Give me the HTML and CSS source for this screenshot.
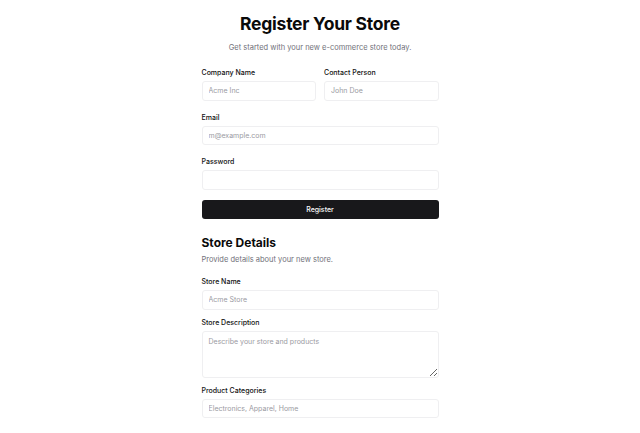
FILE: index.html
```html
<!DOCTYPE html>
<html lang="en">
<head>
<meta charset="utf-8">
<title>Register Your Store</title>
<link rel="stylesheet" href="styles.css">
</head>
<body>
<main class="page">
  <header class="intro">
    <h1 class="title">Register Your Store</h1>
    <p class="subtitle">Get started with your new e-commerce store today.</p>
  </header>
  <form class="form">
    <div class="row">
      <div class="field">
        <label class="label">Company Name</label>
        <input class="input" placeholder="Acme Inc">
      </div>
      <div class="field">
        <label class="label">Contact Person</label>
        <input class="input" placeholder="John Doe">
      </div>
    </div>
    <div class="field">
      <label class="label">Email</label>
      <input class="input" placeholder="m@example.com">
    </div>
    <div class="field">
      <label class="label">Password</label>
      <input class="input" type="password">
    </div>
    <button type="button" class="btn">Register</button>
  </form>
  <section class="details">
    <h2 class="section-title">Store Details</h2>
    <p class="section-sub">Provide details about your new store.</p>
    <div class="details-fields">
      <div class="field">
        <label class="label">Store Name</label>
        <input class="input" placeholder="Acme Store">
      </div>
      <div class="field">
        <label class="label">Store Description</label>
        <textarea class="input textarea" placeholder="Describe your store and products"></textarea>
      </div>
      <div class="field">
        <label class="label">Product Categories</label>
        <input class="input" placeholder="Electronics, Apparel, Home">
      </div>
    </div>
  </section>
</main>
</body>
</html>
```

FILE: styles.css
```css
* { box-sizing: border-box; }
html, body { margin: 0; padding: 0; background: #ffffff; }
body {
  font-family: Inter, "Noto Sans", sans-serif;
  color: #0a0a0a;
}
.page {
  width: 237px;
  margin: 0 auto;
  padding-top: 13px;
}
.intro { text-align: center; }
.title {
  margin: 0;
  font-size: 17.5px;
  line-height: 22px;
  font-weight: 700;
  letter-spacing: -0.25px;
  color: #0a0a0a;
}
.subtitle {
  margin: 7px 0 0;
  font-size: 7.5px;
  line-height: 11px;
  color: #71717a;
}
.form {
  margin-top: 15px;
  display: flex;
  flex-direction: column;
  gap: 12px;
}
.row {
  display: grid;
  grid-template-columns: 1fr 1fr;
  gap: 8px;
}
.field {
  display: flex;
  flex-direction: column;
  gap: 4px;
}
.label {
  font-size: 7px;
  line-height: 9px;
  font-weight: 500;
  color: #111111;
}
.input {
  display: block;
  width: 100%;
  height: 19.5px;
  border: 1px solid #efeff1;
  border-radius: 3px;
  padding: 0 6px;
  font-family: inherit;
  font-size: 7px;
  color: #0a0a0a;
  background: #ffffff;
  outline: none;
}
.input::placeholder { color: #9a9aa2; }
.textarea {
  height: 47px;
  padding: 5px 6px;
  resize: vertical;
  line-height: 10px;
}
.btn {
  margin-top: -2px;
  height: 19.5px;
  width: 100%;
  border: none;
  border-radius: 3px;
  background: #18181b;
  color: #fafafa;
  font-family: inherit;
  font-size: 7px;
  font-weight: 500;
}
.details { margin-top: 16px; }
.section-title {
  margin: 0;
  font-size: 12px;
  line-height: 16px;
  font-weight: 700;
  color: #0a0a0a;
}
.section-sub {
  margin: 3px 0 0;
  font-size: 7.5px;
  line-height: 11px;
  color: #71717a;
}
.details-fields {
  margin-top: 12px;
  display: flex;
  flex-direction: column;
  gap: 8px;
}
```
